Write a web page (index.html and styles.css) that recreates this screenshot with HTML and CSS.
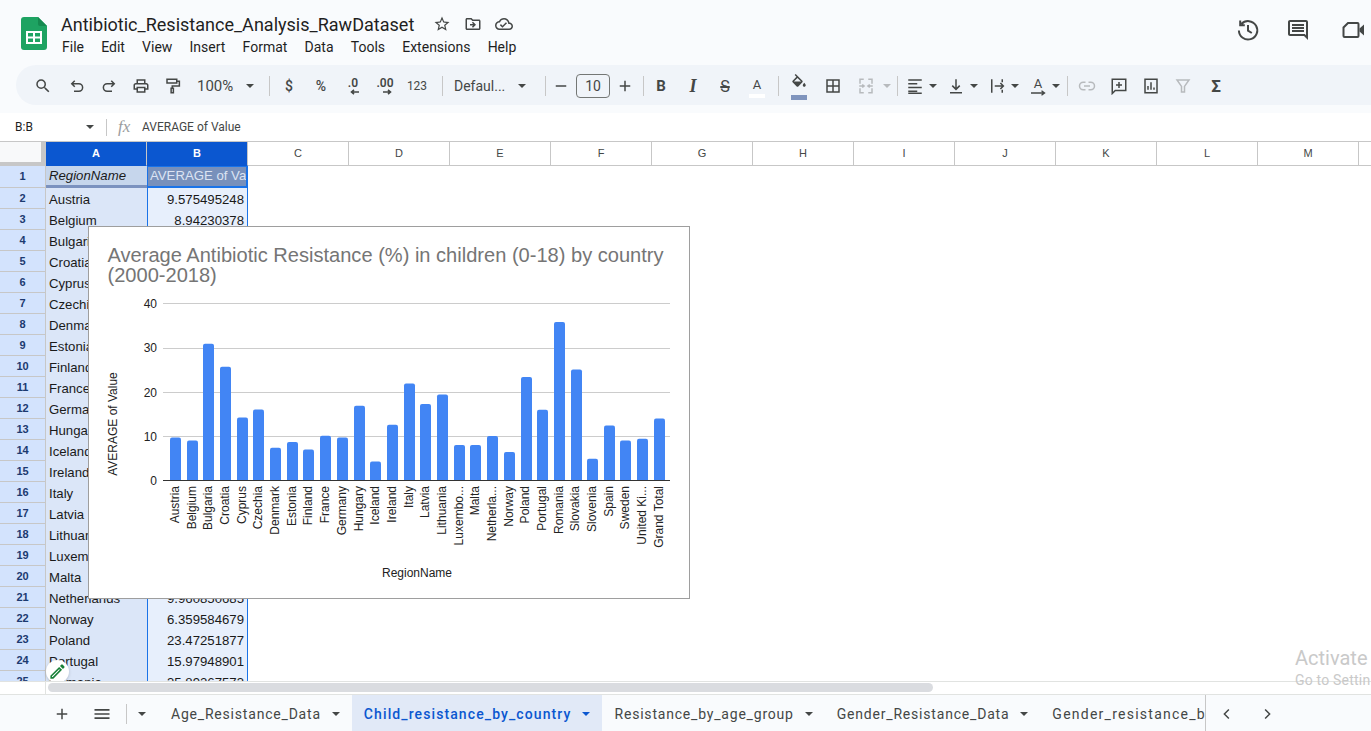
FILE: index.html
```html
<!DOCTYPE html>
<html lang="en-US">
<head>
	<meta charset="UTF-8">
	<title>Antibiotic_Resistance_Analysis_RawDataset</title>
	<link rel="stylesheet" href="styles.css">
</head>
<body>
	<header class="topbar">
		<svg class="logo" viewBox="0 0 26 33"><path fill="#1ea362" d="M3 0H17L26 9V30a3 3 0 0 1-3 3H3a3 3 0 0 1-3-3V3a3 3 0 0 1 3-3z"/><path fill="#158a50" d="M17 0L26 9H19a2 2 0 0 1-2-2z"/><path fill="#fff" d="M5 14H21V27H5z"/><path fill="#1ea362" d="M7 16H12V19.5H7zM14 16H19V19.5H14zM7 21.5H12V25H7zM14 21.5H19V25H14z"/></svg>
		<div class="docinfo">
			<div class="docname">
				<span class="doctitle">Antibiotic_Resistance_Analysis_RawDataset</span>
				<svg class="ico18 first" viewBox="0 0 24 24"><path d="M22 9.24l-7.19-.62L12 2 9.19 8.63 2 9.24l5.46 4.73L5.82 21 12 17.27 18.18 21l-1.63-7.03L22 9.24zM12 15.4l-3.76 2.27 1-4.28-3.32-2.88 4.38-.38L12 6.1l1.71 4.04 4.38.38-3.32 2.88 1 4.28L12 15.4z"/></svg>
				<svg class="ico18" viewBox="0 0 24 24"><path d="M20 6h-8l-2-2H4c-1.1 0-2 .9-2 2v12c0 1.1.9 2 2 2h16c1.1 0 2-.9 2-2V8c0-1.1-.9-2-2-2zm0 12H4V6h5.17l2 2H20v10zm-8.01-9l-1.41 1.41L12.16 12H8v2h4.16l-1.59 1.59L11.99 17 16 13.01 11.99 9z"/></svg>
				<svg class="ico18" viewBox="0 0 24 24"><path d="M19.35 10.04C18.67 6.59 15.64 4 12 4 9.11 4 6.6 5.64 5.35 8.04 2.34 8.36 0 10.91 0 14c0 3.31 2.69 6 6 6h13c2.76 0 5-2.24 5-5 0-2.64-2.05-4.78-4.65-4.96zM19 18H6c-2.21 0-4-1.79-4-4 0-2.05 1.53-3.76 3.56-3.97l1.07-.11.5-.95C8.08 7.14 9.94 6 12 6c2.62 0 4.88 1.86 5.39 4.43l.3 1.5 1.53.11c1.56.1 2.78 1.41 2.78 2.96 0 1.65-1.35 3-3 3zm-9-3.82l-2.09-2.09L6.5 13.5 10 17l6.01-6.01-1.41-1.41z"/></svg>
			</div>
			<nav class="menus">
				<span>File</span><span>Edit</span><span>View</span><span>Insert</span><span>Format</span><span>Data</span><span>Tools</span><span>Extensions</span><span>Help</span>
			</nav>
		</div>
		<div class="topright">
			<svg class="ico24 line" viewBox="0 0 24 24"><path d="M5.4 6A9.2 9.2 0 1 1 2.9 12.5M4.2 2.6V7.2H8.8M12 7V12.6L15.8 15"/></svg>
			<svg class="ico24" viewBox="0 0 24 24"><path d="M22 4c0-1.1-.9-2-2-2H4c-1.1 0-2 .9-2 2v12c0 1.1.9 2 2 2h14l4 4V4zm-2 0v13.17L18.83 16H4V4h16zM6 12h12v2H6zm0-3h12v2H6zm0-3h12v2H6z"/></svg>
			<svg class="ico24 line camera" viewBox="0 0 24 24"><path d="M7 5H16.500a1 1 0 0 1 1 1V18a1 1 0 0 1-1 1H3.500a1 1 0 0 1-1-1V9.500z"/><path class="solid" d="M18.500 10.500L23 6.500V17.500L18.500 13.500z"/></svg>
		</div>
	</header>

	<div class="toolbar">
		<span class="btn search"><svg class="ico18" viewBox="0 0 24 24"><path d="M15.5 14h-.79l-.28-.27A6.471 6.471 0 0 0 16 9.500 6.500 6.500 0 1 0 9.500 16c1.610 0 3.090-.59 4.230-1.570l.27.28v.79l5 4.990L20.490 19l-4.990-5zm-6 0C7.010 14 5 11.990 5 9.500S7.010 5 9.500 5 14 7.010 14 9.500 11.990 14 9.500 14z"/></svg></span>
		<span class="btn undo"><svg class="ico18 line" viewBox="0 0 24 24"><path d="M5 9H14.500a5 5 0 0 1 0 10H8M9 5L5 9l4 4"/></svg></span>
		<span class="btn"><svg class="ico18 line" viewBox="0 0 24 24"><path d="M19 9H9.500a5 5 0 0 0 0 10H16M15 5l4 4-4 4"/></svg></span>
		<span class="btn"><svg class="ico18" viewBox="0 0 24 24"><path d="M19 8h-1V3H6v5H5c-1.660 0-3 1.340-3 3v6h4v4h12v-4h4v-6c0-1.660-1.340-3-3-3zM8 5h8v3H8V5zm8 12v2H8v-4h8v2zm2-2v-2H6v2H4v-4c0-.55.45-1 1-1h14c.55 0 1 .45 1 1v4h-2z"/></svg></span>
		<span class="btn"><svg class="ico18 line" viewBox="0 0 24 24"><path d="M4 3H17V8H4zM17 5.500H20.500V12H11V15M9.500 15H12.500V21H9.500z"/></svg></span>
		<span class="zoomlevel"><span>100%</span><i class="caret"></i></span>
		<i class="sep sep-zoom"></i>
		<span class="btn txt">$</span>
		<span class="btn txt">%</span>
		<span class="btn decimals"><b>.0</b><svg viewBox="0 0 10 6"><path d="M9 3H2M4 .8L1.500 3 4 5.200"/></svg></span>
		<span class="btn decimals"><b>.00</b><svg viewBox="0 0 10 6"><path d="M1 3H8M6 .8L8.500 3 6 5.200"/></svg></span>
		<span class="btn txt small">123</span>
		<i class="sep sep-font"></i>
		<span class="fontname"><span>Defaul...</span><i class="caret"></i></span>
		<i class="sep sep-size"></i>
		<span class="btn narrow"><svg class="ico18 line" viewBox="0 0 24 24"><path d="M5 12H19"/></svg></span>
		<span class="sizebox">10</span>
		<span class="btn narrow"><svg class="ico18 line" viewBox="0 0 24 24"><path d="M5 12H19M12 5V19"/></svg></span>
		<i class="sep sep-style"></i>
		<span class="btn bold">B</span>
		<span class="btn italic">I</span>
		<span class="btn strike">S</span>
		<span class="btn color"><span>A</span><i class="swatch white"></i></span>
		<i class="sep sep-fill"></i>
		<span class="btn color fill"><svg class="ico18" viewBox="0 0 24 24"><path d="M16.560 8.940L7.620 0 6.210 1.410l2.380 2.380-5.150 5.150c-.59.59-.59 1.540 0 2.120l5.500 5.500c.29.29.68.44 1.060.44s.77-.15 1.060-.44l5.500-5.500c.59-.58.59-1.530 0-2.120zM5.210 10L10 5.210 14.790 10H5.210zM19 11.500s-2 2.170-2 3.500c0 1.100.9 2 2 2s2-.9 2-2c0-1.330-2-3.500-2-3.500z"/></svg><i class="swatch blue"></i></span>
		<span class="btn borders"><svg class="ico18 line" viewBox="0 0 24 24"><path d="M4 4H20V20H4zM12 4V20M4 12H20"/></svg></span>
		<span class="btn merge"><svg class="ico18 line off" viewBox="0 0 24 24"><path d="M9 3H4V9M4 15V21H9M15 3H20V9M20 15V21H15M3 12H9M7 10L9.500 12 7 14M21 12H15M17 10L14.500 12 17 14"/></svg><i class="caret off"></i></span>
		<i class="sep sep-align"></i>
		<span class="pair first"><svg class="ico18 line" viewBox="0 0 24 24"><path d="M3 4H21M3 9H15M3 14H21M3 19H15 M3 21.500H21"/></svg><i class="caret"></i></span>
		<span class="pair"><svg class="ico18 line" viewBox="0 0 24 24"><path d="M12 3V16M7 11.500l5 5 5-5M4 21H20"/></svg><i class="caret"></i></span>
		<span class="pair"><svg class="ico18 line" viewBox="0 0 24 24"><path d="M5 3V21M19 3V7M19 10V14M19 17V21M9 12H21M16.500 8L20.500 12 16.500 16"/></svg><i class="caret"></i></span>
		<span class="pair"><span class="rotate"><span>A</span><svg viewBox="0 0 16 6"><path d="M1 3H14M11.500 .8L14.500 3 11.500 5.200"/></svg></span><i class="caret"></i></span>
		<i class="sep sep-insert"></i>
		<span class="btn"><svg class="ico18 line off" viewBox="0 0 24 24"><path d="M10 7H7a5 5 0 0 0 0 10h3M14 7h3a5 5 0 0 1 0 10h-3M8 12H16"/></svg></span>
		<span class="btn"><svg class="ico18 line" viewBox="0 0 24 24"><path d="M3 3H21V18H7L3 22zM12 6.500V14.500M8 10.500H16"/></svg></span>
		<span class="btn"><svg class="ico18 line" viewBox="0 0 24 24"><path d="M4 3H20V21H4zM8 17V12M12 17V7M16 17V14"/></svg></span>
		<span class="btn"><svg class="ico18 line off" viewBox="0 0 24 24"><path d="M4 4H20L14 12.500V20H10V12.500z"/></svg></span>
		<span class="btn sigma">Σ</span>
	</div>

	<div class="formulabar">
		<span class="namebox"><span>B:B</span><i class="caret"></i></span>
		<i class="sep"></i>
		<span class="fx">fx</span>
		<span class="formula">AVERAGE of Value</span>
	</div>

	<main class="sheet">
		<div class="colheads">
			<div class="corner"></div>
			<div class="colhead on">A</div><div class="colhead on">B</div><div class="colhead">C</div><div class="colhead">D</div><div class="colhead">E</div><div class="colhead">F</div><div class="colhead">G</div><div class="colhead">H</div><div class="colhead">I</div><div class="colhead">J</div><div class="colhead">K</div><div class="colhead">L</div><div class="colhead">M</div><div class="colhead"></div>
		</div>
		<div class="rows">
			<div class="rowhead head1">1</div><div class="cell a head-a">RegionName</div><div class="cell b head-b">AVERAGE of Value</div>
			<div class="rowhead">2</div><div class="cell a">Austria</div><div class="cell b">9.575495248</div>
			<div class="rowhead">3</div><div class="cell a">Belgium</div><div class="cell b">8.94230378</div>
			<div class="rowhead">4</div><div class="cell a">Bulgaria</div><div class="cell b"></div>
			<div class="rowhead">5</div><div class="cell a">Croatia</div><div class="cell b"></div>
			<div class="rowhead">6</div><div class="cell a">Cyprus</div><div class="cell b"></div>
			<div class="rowhead">7</div><div class="cell a">Czechia</div><div class="cell b"></div>
			<div class="rowhead">8</div><div class="cell a">Denmark</div><div class="cell b"></div>
			<div class="rowhead">9</div><div class="cell a">Estonia</div><div class="cell b"></div>
			<div class="rowhead">10</div><div class="cell a">Finland</div><div class="cell b"></div>
			<div class="rowhead">11</div><div class="cell a">France</div><div class="cell b"></div>
			<div class="rowhead">12</div><div class="cell a">Germany</div><div class="cell b"></div>
			<div class="rowhead">13</div><div class="cell a">Hungary</div><div class="cell b"></div>
			<div class="rowhead">14</div><div class="cell a">Iceland</div><div class="cell b"></div>
			<div class="rowhead">15</div><div class="cell a">Ireland</div><div class="cell b"></div>
			<div class="rowhead">16</div><div class="cell a">Italy</div><div class="cell b"></div>
			<div class="rowhead">17</div><div class="cell a">Latvia</div><div class="cell b"></div>
			<div class="rowhead">18</div><div class="cell a">Lithuania</div><div class="cell b"></div>
			<div class="rowhead">19</div><div class="cell a">Luxembourg</div><div class="cell b"></div>
			<div class="rowhead">20</div><div class="cell a">Malta</div><div class="cell b"></div>
			<div class="rowhead">21</div><div class="cell a">Netherlands</div><div class="cell b">9.960850685</div>
			<div class="rowhead">22</div><div class="cell a">Norway</div><div class="cell b">6.359584679</div>
			<div class="rowhead">23</div><div class="cell a">Poland</div><div class="cell b">23.47251877</div>
			<div class="rowhead">24</div><div class="cell a">Portugal</div><div class="cell b">15.97948901</div>
			<div class="rowhead">25</div><div class="cell a">Romania</div><div class="cell b">35.89267573</div>
		</div>

		<div class="chart">
			<svg viewBox="89 227 600 371" width="600" height="371">
				<text class="title" x="107.500" y="262">Average Antibiotic Resistance (%) in children (0-18) by country</text>
				<text class="title" x="107.500" y="282">(2000-2018)</text>
				<path class="gridline" d="M163 303.500H670M163 348.500H670M163 392.500H670M163 436.500H670"/>
				<g class="ticks">
					<text x="157" y="308">40</text>
					<text x="157" y="352">30</text>
					<text x="157" y="397">20</text>
					<text x="157" y="441">10</text>
					<text x="157" y="485">0</text>
				</g>
				<clipPath id="plot"><rect x="163" y="290" width="507" height="190"/></clipPath>
				<g class="bars" clip-path="url(#plot)">
					<rect x="170" y="437.600" width="11" height="50"/>
					<rect x="187" y="440.400" width="11" height="50"/>
					<rect x="203" y="343.700" width="11" height="150"/>
					<rect x="220" y="366.700" width="11" height="120"/>
					<rect x="237" y="417.600" width="11" height="70"/>
					<rect x="253" y="409.600" width="11" height="80"/>
					<rect x="270" y="447.700" width="11" height="40"/>
					<rect x="287" y="442" width="11" height="46"/>
					<rect x="303" y="449.500" width="11" height="40"/>
					<rect x="320" y="435.800" width="11" height="50"/>
					<rect x="337" y="437.500" width="11" height="50"/>
					<rect x="354" y="405.700" width="11" height="80"/>
					<rect x="370" y="461.400" width="11" height="30"/>
					<rect x="387" y="424.700" width="11" height="60"/>
					<rect x="404" y="383.500" width="11" height="100"/>
					<rect x="420" y="403.900" width="11" height="80"/>
					<rect x="437" y="394.600" width="11" height="90"/>
					<rect x="454" y="445" width="11" height="40"/>
					<rect x="470" y="445" width="11" height="40"/>
					<rect x="487" y="436" width="11" height="50"/>
					<rect x="504" y="451.900" width="11" height="40"/>
					<rect x="521" y="377" width="11" height="110"/>
					<rect x="537" y="409.800" width="11" height="80"/>
					<rect x="554" y="322" width="11" height="170"/>
					<rect x="571" y="369.500" width="11" height="120"/>
					<rect x="587" y="458.800" width="11" height="30"/>
					<rect x="604" y="425.600" width="11" height="60"/>
					<rect x="620" y="440.600" width="11" height="50"/>
					<rect x="637" y="438.800" width="11" height="50"/>
					<rect x="654" y="418.500" width="11" height="70"/>
				</g>
				<path class="axis" d="M163 480.500H670"/>
				<g class="xlabels">
					<text transform="rotate(-90 179.500 486)" x="179.500" y="486">Austria</text>
					<text transform="rotate(-90 196.500 486)" x="196.500" y="486">Belgium</text>
					<text transform="rotate(-90 212.500 486)" x="212.500" y="486">Bulgaria</text>
					<text transform="rotate(-90 229.500 486)" x="229.500" y="486">Croatia</text>
					<text transform="rotate(-90 246.500 486)" x="246.500" y="486">Cyprus</text>
					<text transform="rotate(-90 262.500 486)" x="262.500" y="486">Czechia</text>
					<text transform="rotate(-90 279.500 486)" x="279.500" y="486">Denmark</text>
					<text transform="rotate(-90 296.500 486)" x="296.500" y="486">Estonia</text>
					<text transform="rotate(-90 312.500 486)" x="312.500" y="486">Finland</text>
					<text transform="rotate(-90 329.500 486)" x="329.500" y="486">France</text>
					<text transform="rotate(-90 346.500 486)" x="346.500" y="486">Germany</text>
					<text transform="rotate(-90 363.500 486)" x="363.500" y="486">Hungary</text>
					<text transform="rotate(-90 379.500 486)" x="379.500" y="486">Iceland</text>
					<text transform="rotate(-90 396.500 486)" x="396.500" y="486">Ireland</text>
					<text transform="rotate(-90 413.500 486)" x="413.500" y="486">Italy</text>
					<text transform="rotate(-90 429.500 486)" x="429.500" y="486">Latvia</text>
					<text transform="rotate(-90 446.500 486)" x="446.500" y="486">Lithuania</text>
					<text transform="rotate(-90 463.500 486)" x="463.500" y="486">Luxembo...</text>
					<text transform="rotate(-90 479.500 486)" x="479.500" y="486">Malta</text>
					<text transform="rotate(-90 496.500 486)" x="496.500" y="486">Netherla...</text>
					<text transform="rotate(-90 513.500 486)" x="513.500" y="486">Norway</text>
					<text transform="rotate(-90 529.500 486)" x="529.500" y="486">Poland</text>
					<text transform="rotate(-90 546.500 486)" x="546.500" y="486">Portugal</text>
					<text transform="rotate(-90 563.500 486)" x="563.500" y="486">Romania</text>
					<text transform="rotate(-90 579.500 486)" x="579.500" y="486">Slovakia</text>
					<text transform="rotate(-90 596.500 486)" x="596.500" y="486">Slovenia</text>
					<text transform="rotate(-90 613.500 486)" x="613.500" y="486">Spain</text>
					<text transform="rotate(-90 629.500 486)" x="629.500" y="486">Sweden</text>
					<text transform="rotate(-90 646.500 486)" x="646.500" y="486">United Ki...</text>
					<text transform="rotate(-90 663.500 486)" x="663.500" y="486">Grand Total</text>
				</g>
				<text class="axistitle" x="417" y="577">RegionName</text>
				<text class="axistitle" transform="rotate(-90 117 424)" x="117" y="424">AVERAGE of Value</text>
			</svg>
		</div>

		<div class="editfab"><svg viewBox="0 0 24 24"><path d="M14.060 9.020l.92.92L5.920 19H5v-.92l9.060-9.060M17.660 3c-.25 0-.51.1-.7.29l-1.830 1.830 3.750 3.750 1.830-1.830c.39-.39.39-1.020 0-1.410l-2.340-2.340c-.2-.2-.45-.29-.71-.29zm-3.600 3.190L3 17.250V21h3.750L17.810 9.940l-3.750-3.750z"/></svg></div>
	</main>

	<div class="hscroll"><div class="scrollgap"></div><div class="thumb"></div></div>

	<footer class="tabbar">
		<span class="tabbtn plus"><svg class="ico18 line" viewBox="0 0 24 24"><path d="M5 12H19M12 5V19"/></svg></span>
		<span class="tabbtn lines"><svg class="ico20" viewBox="0 0 24 24"><path d="M3 18h18v-2H3v2zm0-5h18v-2H3v2zm0-7v2h18V6H3z"/></svg></span>
		<i class="sep tabsep"></i>
		<i class="caret allsheets"></i>
		<div class="tabs">
			<span class="tab"><span>Age_Resistance_Data</span><i class="caret"></i></span>
			<span class="tab active"><span>Child_resistance_by_country</span><i class="caret"></i></span>
			<span class="tab"><span>Resistance_by_age_group</span><i class="caret"></i></span>
			<span class="tab"><span>Gender_Resistance_Data</span><i class="caret"></i></span>
			<span class="tab last"><span>Gender_resistance_by_age</span><i class="caret"></i></span>
		</div>
		<span class="tabbtn prev"><svg class="ico18 line" viewBox="0 0 24 24"><path d="M14.500 6L8.500 12l6 6"/></svg></span>
		<span class="tabbtn next"><svg class="ico18 line" viewBox="0 0 24 24"><path d="M9.500 6l6 6-6 6"/></svg></span>
	</footer>

	<div class="watermark">
		<div class="wm1">Activate</div>
		<div class="wm2">Go to Settin</div>
	</div>
</body>
</html>
```

FILE: styles.css
```css
* {
	box-sizing: border-box;
}

html, body {
	margin: 0;
	height: 100%;
}

body {
	width: 1371px;
	height: 731px;
	overflow: hidden;
	position: relative;
	display: flex;
	flex-direction: column;
	background: #f9fbfd;
	color: #444746;
	font-family: Roboto, "Liberation Sans", sans-serif;
}

svg {
	display: block;
	fill: #444746;
	flex: none;
}

.ico18 {
	width: 18px;
	height: 18px;
}

.ico20 {
	width: 20px;
	height: 20px;
}

.ico24 {
	width: 24px;
	height: 24px;
}

.line {
	fill: none;
	stroke: #444746;
	stroke-width: 2;
}

.line .solid {
	fill: #444746;
	stroke: none;
}

.line.off {
	stroke: #b7babd;
}

.caret {
	display: block;
	flex: none;
	width: 0;
	height: 0;
	border-left: 4px solid transparent;
	border-right: 4px solid transparent;
	border-top: 4px solid #444746;
}

.caret.off {
	border-top-color: #b7babd;
}

.sep {
	display: block;
	flex: none;
	width: 1px;
	height: 20px;
	background: #c7c7c7;
}

/* top */
.topbar {
	flex: none;
	height: 65px;
	display: flex;
	align-items: flex-start;
	padding-left: 21px;
}

.logo {
	width: 26px;
	height: 33px;
	margin-top: 17px;
}

.docinfo {
	margin-left: 14px;
	padding-top: 12px;
}

.docname {
	display: flex;
	align-items: center;
	height: 24px;
}

.doctitle {
	font-size: 18.050px;
	color: #1f1f1f;
	width: 353px;
	white-space: nowrap;
}

.docname .ico18 {
	margin-left: 13px;
}

.docname .ico18.first {
	margin-left: 19px;
}

.menus {
	display: flex;
	gap: 17.200px;
	margin-top: 1px;
	padding-left: 1px;
	font-size: 14px;
	line-height: 20px;
	color: #1f1f1f;
}

.topright {
	margin-left: auto;
	margin-top: 18px;
	display: flex;
	gap: 26px;
	padding-right: 6px;
}

.camera {
	margin-left: 5px;
}

/* toolbar */
.toolbar {
	flex: none;
	height: 40px;
	margin-left: 16px;
	padding: 2px 0 0 11px;
	display: flex;
	align-items: center;
	background: #f0f4f9;
	border-radius: 20px 0 0 20px;
}

.btn {
	flex: none;
	width: 32px;
	height: 28px;
	display: flex;
	align-items: center;
	justify-content: center;
	font-size: 13px;
	position: relative;
}

.btn.undo {
	margin-left: 2px;
}

.btn.narrow {
	width: 24px;
}

.btn.txt {
	font-size: 14px;
	font-weight: 500;
}

.btn.small {
	font-size: 12px;
	font-weight: 400;
}

.zoomlevel {
	flex: none;
	width: 72px;
	padding-left: 8px;
	display: flex;
	align-items: center;
	font-size: 15px;
}

.zoomlevel .caret {
	margin-left: 13px;
}

.sep-zoom {
	margin: 0 3px 0 8px;
}

.decimals {
	flex-direction: column;
	font-size: 12px;
	line-height: 11px;
}

.decimals b {
	font-weight: 600;
}

.decimals svg {
	width: 10px;
	height: 6px;
	margin-left: 4px;
	fill: none;
	stroke: #444746;
	stroke-width: 1.6;
}

.sep-font {
	margin-left: 9px;
}

.fontname {
	flex: none;
	width: 94px;
	padding-left: 11px;
	display: flex;
	align-items: center;
	font-size: 14px;
}

.fontname .caret {
	margin-left: 13px;
}

.sep-size {
	margin: 0 3px 0 8px;
}

.sizebox {
	flex: none;
	width: 34px;
	height: 24px;
	margin: 0 3px;
	border: 1px solid #747775;
	border-radius: 4px;
	text-align: center;
	font-size: 14px;
	line-height: 22px;
}

.sep-style {
	margin: 0 1px 0 6px;
}

.bold {
	font-size: 15px;
	font-weight: 700;
}

.italic {
	font-family: "Liberation Serif", serif;
	font-size: 18px;
	font-weight: 700;
	font-style: italic;
}

.strike {
	font-size: 16px;
	text-decoration: line-through;
	text-decoration-thickness: 1.500px;
}

.color {
	flex-direction: column;
	font-size: 13px;
	line-height: 15px;
	padding-bottom: 4px;
}

.swatch {
	position: absolute;
	left: 8px;
	bottom: 2px;
	width: 16px;
	height: 4px;
}

.swatch.white {
	background: #fff;
}

.swatch.blue {
	background: #7f94bd;
	height: 5px;
	bottom: 0;
}

.sep-fill {
	margin: 0 4px 0 5px;
}

.color.fill .ico18 {
	margin-top: -3px;
}

.borders {
	margin-left: 2px;
}

.merge {
	width: 43px;
	justify-content: flex-start;
	padding-left: 7px;
	margin-left: 1px;
}

.merge .caret {
	margin-left: 8px;
}

.sep-align {
	margin-left: 4px;
}

.pair {
	flex: none;
	width: 41px;
	display: flex;
	align-items: center;
	padding-left: 3px;
}

.pair.first {
	margin-left: 5px;
}

.pair .caret {
	margin-left: 5px;
}

.rotate {
	width: 18px;
	font-size: 13px;
	line-height: 13px;
	text-align: center;
}

.rotate svg {
	width: 16px;
	height: 6px;
	margin: 0 auto;
	fill: none;
	stroke: #444746;
	stroke-width: 1.400;
}

.sep-insert {
	margin: 0 3px 0 0;
}

.sigma {
	margin-left: 1px;
	font-size: 17px;
	font-weight: 700;
}

/* formula bar */
.formulabar {
	flex: none;
	height: 29px;
	margin-top: 8px;
	display: flex;
	align-items: center;
	background: #fff;
	border-bottom: 1px solid #c7c7c7;
	font-size: 12px;
}

.namebox {
	flex: none;
	width: 106px;
	padding-left: 15px;
	display: flex;
	align-items: center;
}

.namebox span {
	width: 71px;
	color: #1f1f1f;
}

.formulabar .sep {
	height: 17px;
}

.fx {
	margin-left: 11px;
	width: 24px;
	font-family: "Liberation Serif", serif;
	font-style: italic;
	font-size: 17px;
	color: #9a9c9e;
}

.formula {
	color: #444746;
	white-space: nowrap;
}

/* grid */
.sheet {
	flex: 1;
	min-height: 0;
	position: relative;
	overflow: hidden;
	background: #fff;
	font-family: "Liberation Sans", Arial, sans-serif;
}

.colheads {
	display: flex;
	height: 24px;
	width: 1500px;
}

.corner {
	flex: none;
	width: 46px;
	background: #f8f9fa;
	border-right: 5px solid #c7c7c7;
	border-bottom: 4px solid #c7c7c7;
}

.colhead {
	flex: none;
	width: 101px;
	border-right: 1px solid #c7c7c7;
	border-bottom: 1px solid #c7c7c7;
	text-align: center;
	font-size: 11px;
	line-height: 22px;
	color: #444746;
}

.colhead.on {
	background: #0b57d0;
	color: #fff;
	font-weight: 700;
	border-bottom-color: #0b57d0;
}

.rows {
	display: grid;
	grid-template-columns: 46px 101px 101px;
	grid-template-rows: 22px;
	grid-auto-rows: 21px;
	width: 248px;
}

.rowhead {
	background: #d3e3fd;
	border-right: 1px solid #c7c7c7;
	border-bottom: 1px solid #c7c7c7;
	color: #1c3a70;
	font-size: 11px;
	font-weight: 700;
	line-height: 21px;
	text-align: center;
}

.cell {
	font-size: 13.200px;
	line-height: 23px;
	color: #1a1a1a;
	white-space: nowrap;
	overflow: hidden;
}

.a {
	background: #dbe6f8;
	padding-left: 3px;
}

.b {
	background: #e7effc;
	border-left: 1px solid #1a73e8;
	border-right: 1px solid #1a73e8;
	text-align: right;
	padding-right: 3px;
}

.head-a {
	background: #c6d6ec;
	border-bottom: 3px solid #7b92bf;
	font-style: italic;
	line-height: 19px;
}

.head-b {
	background: #7890bb;
	border: 1px solid #1a73e8;
	border-width: 1px 2px 2px 1px;
	color: #dce4f3;
	text-align: left;
	padding: 0 0 0 2px;
	line-height: 18px;
}

/* chart sits over the cells */
.chart {
	position: absolute;
	left: 88px;
	top: 84px;
	width: 602px;
	height: 373px;
	background: #fff;
	border: 1px solid #9e9e9e;
}

.chart text {
	font-family: "Liberation Sans", Arial, sans-serif;
	font-size: 12px;
	fill: #222;
}

.chart .title {
	font-size: 20.070px;
	fill: #757575;
}

.chart .ticks text {
	text-anchor: end;
}

.chart .xlabels {
	transform: translateX(-1px);
}

.chart .xlabels text {
	text-anchor: end;
}

.chart .axistitle {
	text-anchor: middle;
}

.gridline {
	fill: none;
	stroke: #ccc;
	stroke-width: 1;
}

.axis {
	fill: none;
	stroke: #333;
	stroke-width: 1;
}

.bars rect {
	fill: #4285f4;
	rx: 2px;
}

.editfab {
	position: absolute;
	left: 46px;
	top: 518px;
	width: 23px;
	height: 23px;
	padding: 2px;
	border-radius: 50%;
	background: #fff;
	box-shadow: 0 1px 3px rgba(60, 64, 67, .25);
}

.editfab svg {
	width: 19px;
	height: 19px;
	fill: #188038;
}

/* scrollbar */
.hscroll {
	flex: none;
	height: 14px;
	display: flex;
	background: #fff;
	border-top: 1px solid #e1e3e1;
	border-bottom: 1px solid #e1e3e1;
}

.scrollgap {
	flex: none;
	width: 46px;
	border-right: 1px solid #e1e3e1;
}

.thumb {
	width: 885px;
	height: 9px;
	margin: 1px 0 0 2px;
	border-radius: 5px;
	background: #dadce0;
}

/* sheet tabs */
.tabbar {
	flex: none;
	height: 36px;
	display: flex;
	align-items: center;
	padding-left: 46px;
}

.tabbtn {
	flex: none;
	width: 32px;
	height: 32px;
	margin-top: 2px;
	display: flex;
	align-items: center;
	justify-content: center;
}

.tabbtn.lines {
	margin-left: 8px;
}

.tabsep {
	margin-left: 8px;
	margin-top: 2px;
}

.allsheets {
	margin: 2px 13px 0 11px;
}

.tabs {
	width: 1047px;
	height: 36px;
	display: flex;
	overflow: hidden;
	border-right: 1px solid #c7c7c7;
	flex: none;
}

.tab {
	flex: none;
	height: 36px;
	padding: 2px 12px 0;
	display: flex;
	align-items: center;
	font-size: 14px;
	letter-spacing: .8px;
	white-space: nowrap;
}

.tab .caret {
	margin-left: 11px;
}

.tab.active {
	background: #e1e9f7;
	color: #0b57d0;
	font-weight: 500;
	letter-spacing: 1.100px;
}

.tab.active .caret {
	border-top-color: #0b57d0;
}

.tab.last {
	letter-spacing: 1.250px;
}

.tabbtn.prev {
	margin-left: 5px;
}

.tabbtn.next {
	margin-left: 8px;
}

/* windows watermark */
.watermark {
	position: absolute;
	left: 1295px;
	top: 646px;
	color: #c9c9c9;
	white-space: nowrap;
	pointer-events: none;
}

.wm1 {
	font-size: 20px;
	line-height: 24px;
}

.wm2 {
	font-size: 14px;
	line-height: 20px;
	letter-spacing: .2px;
}
```
